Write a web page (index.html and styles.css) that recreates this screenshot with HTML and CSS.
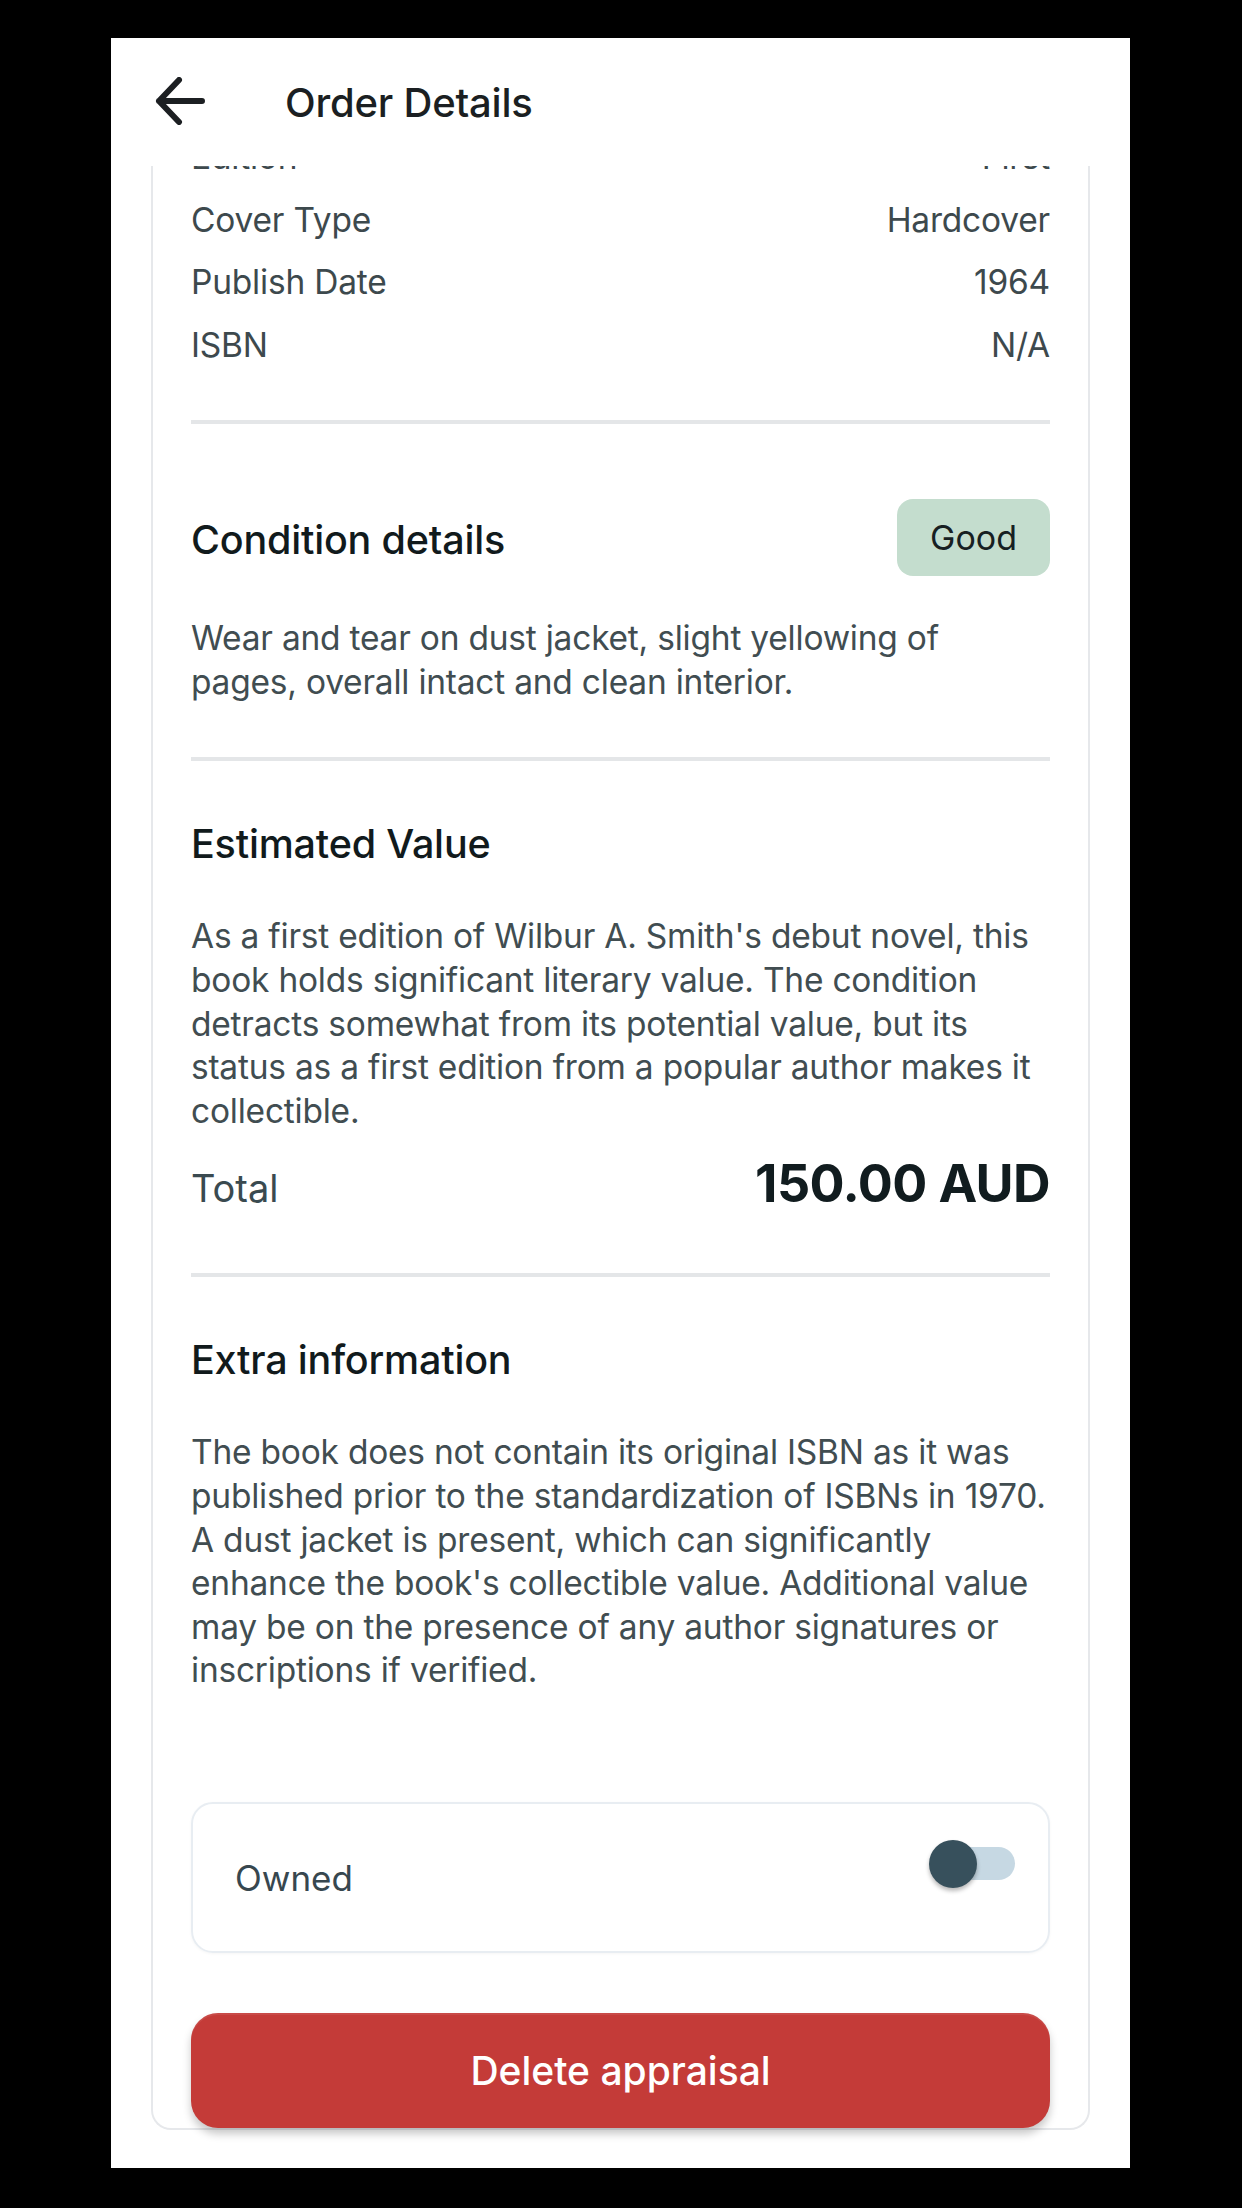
FILE: index.html
```html
<!DOCTYPE html>
<html lang="en">
<head>
<meta charset="utf-8">
<title>Order Details</title>
<link rel="stylesheet" href="styles.css">
</head>
<body>
<div class="screen">
  <header class="appbar">
    <svg class="back" viewBox="0 0 50 48" width="50" height="48" aria-hidden="true">
      <path d="M4 24 H47 M24 3 L4 24 L24 45" fill="none" stroke="#1c1f22" stroke-width="6" stroke-linecap="round" stroke-linejoin="round"/>
    </svg>
    <h1 class="title">Order Details</h1>
  </header>
  <main class="scroll">
    <section class="card">
      <div class="specs">
        <div class="spec"><span>Edition</span><span>First</span></div>
        <div class="spec"><span>Cover Type</span><span>Hardcover</span></div>
        <div class="spec"><span>Publish Date</span><span>1964</span></div>
        <div class="spec"><span>ISBN</span><span>N/A</span></div>
      </div>
      <hr class="divider divider-specs">
      <div class="cond-head">
        <h2 class="heading">Condition details</h2>
        <span class="badge">Good</span>
      </div>
      <p class="text cond-text">Wear and tear on dust jacket, slight yellowing of<br>pages, overall intact and clean interior.</p>
      <hr class="divider divider-cond">
      <h2 class="heading section-head">Estimated Value</h2>
      <p class="text section-text">As a first edition of Wilbur A. Smith's debut novel, this<br>book holds significant literary value. The condition<br>detracts somewhat from its potential value, but its<br>status as a first edition from a popular author makes it<br>collectible.</p>
      <div class="total">
        <span class="total-label">Total</span>
        <span class="total-value">150.00 AUD</span>
      </div>
      <hr class="divider divider-total">
      <h2 class="heading section-head">Extra information</h2>
      <p class="text section-text">The book does not contain its original ISBN as it was<br>published prior to the standardization of ISBNs in 1970.<br>A dust jacket is present, which can significantly<br>enhance the book's collectible value. Additional value<br>may be on the presence of any author signatures or<br>inscriptions if verified.</p>
      <div class="owned">
        <span class="owned-label">Owned</span>
        <span class="switch" role="switch" aria-checked="false"><span class="track"></span><span class="thumb"></span></span>
      </div>
      <button class="delete" type="button">Delete appraisal</button>
    </section>
  </main>
</div>
</body>
</html>
```
FILE: styles.css
```css
* { box-sizing: border-box; }

html, body {
  margin: 0;
  padding: 0;
  background: #000;
}

body {
  font-family: Inter, "Noto Sans", "Liberation Sans", sans-serif;
  width: 1242px;
  height: 2208px;
  overflow: hidden;
}

.screen {
  margin: 38px 0 0 111px;
  width: 1019px;
  height: 2130px;
  background: #fff;
  display: flex;
  flex-direction: column;
  overflow: hidden;
}

.appbar {
  flex: 0 0 128px;
  display: flex;
  align-items: center;
  padding-left: 44px;
  background: #fff;
}

.back {
  display: block;
  flex: 0 0 auto;
  margin-top: -2px;
}

.title {
  margin: 0 0 0 80px;
  font-size: 40px;
  font-weight: 500;
  color: #1b1f22;
  letter-spacing: -0.2px;
}

.scroll {
  flex: 1 1 auto;
  min-height: 0;
  overflow: hidden;
  display: flex;
  flex-direction: column;
  justify-content: flex-end;
  padding: 0 40px 38px 40px;
}

.card {
  flex: 0 0 auto;
  border: 2px solid #e6e8eb;
  border-top: 0;
  border-radius: 0 0 20px 20px;
  padding: 0 38px;
  background: #fff;
}

.spec {
  display: flex;
  justify-content: space-between;
  font-size: 33.5px;
  line-height: 62.5px;
  color: #3d494d;
  letter-spacing: -0.2px;
}

.divider {
  border: 0;
  height: 4px;
  background: #e4e6e8;
  margin: 0;
}

.divider-specs { margin-top: 44px; }
.divider-cond { margin-top: 53px; }
.divider-total { margin-top: 59px; }

.cond-head {
  margin-top: 75px;
  height: 77px;
  display: flex;
  align-items: center;
  justify-content: space-between;
}

.heading {
  margin: 0;
  font-size: 39.5px;
  line-height: 48px;
  font-weight: 500;
  color: #111a1c;
  letter-spacing: -0.2px;
}

.cond-head .heading { padding-top: 5px; }

.badge {
  width: 153px;
  height: 77px;
  border-radius: 16px;
  background: #c4ddce;
  display: flex;
  align-items: center;
  justify-content: center;
  font-size: 34px;
  color: #172022;
}

.text {
  margin: 0;
  font-size: 33.5px;
  line-height: 43.6px;
  color: #414d51;
  letter-spacing: -0.22px;
  white-space: nowrap;
}

.cond-text { margin-top: 41px; }

.section-head { margin-top: 59px; }
.section-text { margin-top: 47px; }

.total {
  margin-top: 21px;
  height: 60px;
  display: flex;
  align-items: baseline;
  justify-content: space-between;
}

.total-label {
  font-size: 38px;
  color: #3a4a50;
}

.total-value {
  font-size: 52px;
  line-height: 60px;
  font-weight: 700;
  color: #111c1f;
  letter-spacing: -0.6px;
}

.owned {
  margin-top: 109px;
  height: 151px;
  border: 2px solid #e8edf2;
  border-radius: 22px;
  display: flex;
  align-items: center;
  justify-content: space-between;
  padding: 0 33px 0 42px;
  box-shadow: 0 1px 3px rgba(0, 0, 0, 0.04);
}

.owned-label {
  font-size: 35px;
  color: #37474f;
}

.switch {
  position: relative;
  display: block;
  width: 86px;
  height: 48px;
  margin-bottom: 28px;
}

.track {
  position: absolute;
  left: 6px;
  top: 7.5px;
  width: 80px;
  height: 33px;
  border-radius: 17px;
  background: #c6d8e3;
}

.thumb {
  position: absolute;
  left: 0;
  top: 0;
  width: 48px;
  height: 48px;
  border-radius: 50%;
  background: #37505c;
  box-shadow: 0 3px 4px rgba(0, 0, 0, 0.28);
}

.delete {
  display: block;
  width: 100%;
  height: 115px;
  margin-top: 60px;
  border: 0;
  border-radius: 27px;
  background: #c43b38;
  color: #fff;
  font-family: inherit;
  font-size: 39px;
  font-weight: 500;
  box-shadow: inset 0 2px 0 rgba(255, 255, 255, 0.08), 0 6px 9px rgba(0, 0, 0, 0.22);
}
```
